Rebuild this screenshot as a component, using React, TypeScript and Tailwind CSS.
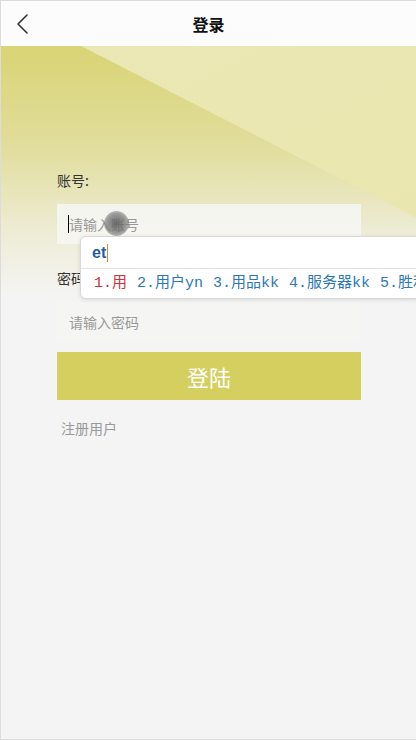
import React from "react";

const font = { fontFamily: '"Noto Sans CJK SC", "Noto Sans", sans-serif' };

function BackIcon() {
  return (
    <svg width="14" height="22" viewBox="0 0 14 22" fill="none">
      <path d="M11 2 L2 11 L11 20" stroke="#333" strokeWidth="1.6" strokeLinecap="round" strokeLinejoin="round" />
    </svg>
  );
}

function Backdrop() {
  return (
    <svg className="absolute left-0 top-0 pointer-events-none" width="416" height="250" viewBox="0 0 416 250">
      <defs>
        <linearGradient id="fade" x1="0" y1="0" x2="0" y2="1">
          <stop offset="0" stopColor="#d9d474" />
          <stop offset="0.4" stopColor="#e1dd9c" />
          <stop offset="0.75" stopColor="#eeecd6" />
          <stop offset="1" stopColor="#f4f4f4" />
        </linearGradient>
        <linearGradient id="tri" x1="0" y1="0" x2="1" y2="1">
          <stop offset="0" stopColor="#ebe8b6" />
          <stop offset="1" stopColor="#e9e6ae" />
        </linearGradient>
      </defs>
      <rect x="0" y="0" width="416" height="250" fill="url(#fade)" />
      <polygon points="80,0 416,0 416,172" fill="url(#tri)" />
    </svg>
  );
}

function ImePopup() {
  const items = ["2.用户yn", "3.用品kk", "4.服务器kk", "5.胜利"];
  return (
    <div className="absolute left-[79px] top-[235px] w-[360px] h-[63px] bg-white border border-[#d9d9d9] rounded-l-[6px] shadow-[0_1px_4px_rgba(0,0,0,0.12)]">
      <div className="h-[31px] flex items-center pl-[11px]">
        <span className="text-[16px] font-bold text-[#1f5ea6]" style={{ fontFamily: '"Liberation Sans", Arial, sans-serif' }}>et</span>
        <span className="w-px h-[18px] bg-[#e08a2c] ml-[1px]" />
      </div>
      <div className="h-px bg-[#e3e3e3]" />
      <div
        className="h-[30px] flex items-center pl-[13px] gap-[10px] text-[15px] whitespace-nowrap"
        style={{ fontFamily: '"Liberation Mono", "Noto Sans CJK SC", monospace' }}
      >
        <span className="text-[#c9313b]">1.用</span>
        {items.map((t) => (
          <span key={t} className="text-[#2b78b6]">{t}</span>
        ))}
      </div>
    </div>
  );
}

export default function App() {
  return (
    <div className="relative w-[416px] h-[740px] bg-[#f4f4f4] border-l border-t border-b border-[#dcdcdc] overflow-hidden" style={font}>
      <header className="h-[45px] bg-[#fcfcfd] flex items-center relative">
        <div className="pl-[15px] flex items-center">
          <BackIcon />
        </div>
        <div className="absolute inset-0 flex items-center justify-center text-[16px] font-bold text-[#111]">登录</div>
      </header>

      <main className="relative">
        <Backdrop />
        <div className="relative pt-[124px] px-[56px] flex flex-col">
          <label className="text-[14px] leading-[20px] text-[#333]">账号:</label>
          <div className="mt-[14px] w-[304px] h-[40px] bg-[#f6f6f3]/90 flex items-center pl-[11px] relative">
            <span className="w-px h-[18px] bg-black" />
            <span className="text-[14px] text-[#999]">请输入账号</span>
            <span className="absolute left-[47px] top-[7px] w-[25px] h-[25px] rounded-full bg-[radial-gradient(circle,rgba(95,95,95,0.9)_0%,rgba(115,115,115,0.7)_55%,rgba(150,150,150,0)_100%)]" />
          </div>
          <label className="mt-[24px] text-[14px] leading-[20px] text-[#333]">密码:</label>
          <div className="mt-[14px] w-[304px] h-[40px] bg-[#f5f5f4] flex items-center pl-[12px]">
            <span className="text-[14px] text-[#999]">请输入密码</span>
          </div>
          <button className="mt-[10px] w-[304px] h-[48px] bg-[#d4cf5e] text-white text-[22px] flex items-center justify-center">
            登陆
          </button>
          <div className="mt-[18px] pl-[4px] text-[14px] leading-[20px] text-[#999]">注册用户</div>
        </div>
      </main>

      <ImePopup />
    </div>
  );
}
